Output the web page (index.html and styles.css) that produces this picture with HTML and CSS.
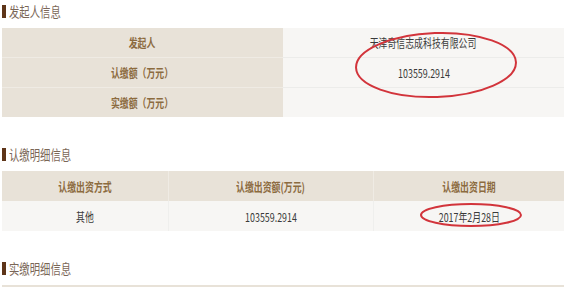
FILE: index.html
```html
<!DOCTYPE html>
<html lang="zh">
<head>
<meta charset="utf-8">
<link rel="stylesheet" href="styles.css">
</head>
<body>
<div class="page">
  <section class="sec">
    <h2 class="title"><span class="t">发起人信息</span></h2>
    <table class="info">
      <tr><th><span class="t">发起人</span></th><td><span class="t">天津奇信志成科技有限公司</span></td></tr>
      <tr><th><span class="t">认缴额（万元）</span></th><td><span class="t">103559.2914</span></td></tr>
      <tr><th><span class="t">实缴额（万元）</span></th><td></td></tr>
    </table>
  </section>
  <section class="sec">
    <h2 class="title"><span class="t">认缴明细信息</span></h2>
    <table class="grid">
      <tr><th class="c1"><span class="t">认缴出资方式</span></th><th class="c2"><span class="t">认缴出资额(万元)</span></th><th class="c3"><span class="t">认缴出资日期</span></th></tr>
      <tr><td><span class="t">其他</span></td><td><span class="t">103559.2914</span></td><td><span class="t">2017年2月28日</span></td></tr>
    </table>
  </section>
  <section class="sec">
    <h2 class="title"><span class="t">实缴明细信息</span></h2>
    <div class="stub"></div>
  </section>
  <svg class="marks" width="564" height="287" viewBox="0 0 564 287">
    <ellipse cx="436" cy="65" rx="80" ry="32" transform="rotate(-2 436 65)" />
    <ellipse cx="471" cy="215" rx="50" ry="11" />
  </svg>
</div>
</body>
</html>
```
FILE: styles.css
```css
html, body {
  margin: 0;
  padding: 0;
  background: #ffffff;
}
.page {
  position: relative;
  width: 564px;
  height: 287px;
  overflow: hidden;
  font-family: "Noto Sans CJK SC", "Noto Sans", sans-serif;
  font-size: 12px;
}
.t {
  display: inline-block;
  white-space: nowrap;
  transform: scaleX(0.74);
}
.sec {
  padding-left: 2px;
  margin-bottom: 26px;
}
.title {
  margin: 0 0 6px 0;
  height: 22px;
  line-height: 22px;
  font-size: 14px;
  font-weight: normal;
  color: #7a6656;
  display: flex;
  align-items: center;
  gap: 3px;
}
.title .t {
  transform-origin: left center;
}
.title::before {
  content: "";
  width: 4px;
  height: 13px;
  background: #5e3519;
}
table {
  border-collapse: collapse;
  width: 562px;
  table-layout: fixed;
}
th, td {
  text-align: center;
  height: 29px;
  padding: 0;
  font-weight: normal;
}
th {
  color: #8c6b3f;
  font-weight: bold;
}
td {
  color: #3a3a3a;
}
.info th {
  width: 281px;
  background: #e8e2d8;
  border-bottom: 1px solid #efebe4;
}
.info td {
  background: #f7f6f4;
  border-bottom: 1px solid #ececea;
}
.info tr:last-child th, .info tr:last-child td {
  border-bottom: none;
}
.grid th {
  background: #e8e2d8;
  height: 30px;
  border-left: 1px solid #efebe4;
}
.grid td {
  background: #f7f6f4;
  height: 30px;
  border-left: 1px solid #efefed;
}
.grid th:first-child, .grid td:first-child {
  border-left: none;
}
.c1 { width: 166px; }
.c2 { width: 204px; }
.stub {
  height: 8px;
  background: #e8e2d8;
  width: 562px;
}
.marks {
  position: absolute;
  left: 0;
  top: 0;
  fill: none;
  stroke: #d2343b;
  stroke-width: 2;
}
```
